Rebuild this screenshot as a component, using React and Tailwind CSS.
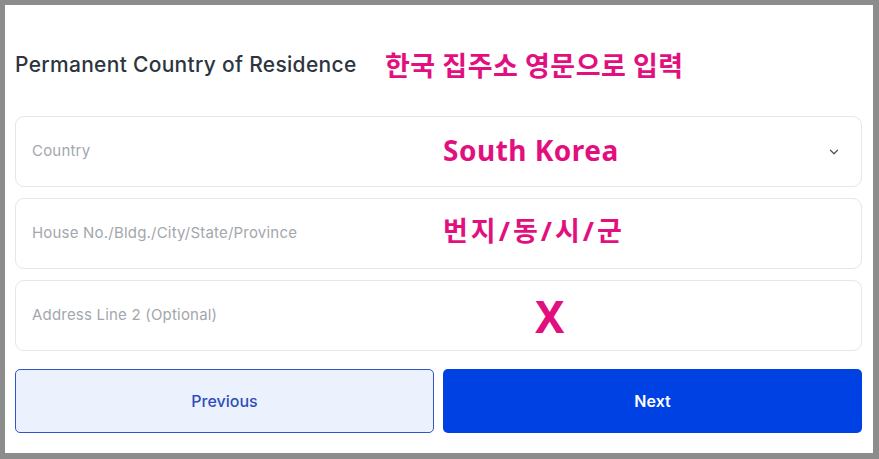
import React from 'react';

const pink = 'text-[#e2107f]';

const fields = [
  { id: 'country', label: 'Country', note: 'South Korea', noteClass: 'text-[28px] tracking-[0.5px] -mt-[3px]', select: true },
  { id: 'line1', label: 'House No./Bldg./City/State/Province', note: '번지/동/시/군', noteClass: 'text-[27px] tracking-[3px] -mt-[4px]' },
  { id: 'line2', label: 'Address Line 2 (Optional)', note: 'X', noteClass: 'text-[44px] pl-[92px] leading-none mt-[1px]' },
];

const Chevron = () => (
  <svg width="14" height="14" viewBox="0 0 24 24" fill="none" stroke="#555" strokeWidth="2.2" strokeLinecap="round" strokeLinejoin="round">
    <path d="M6 9l6 6 6-6" />
  </svg>
);

const App = () => {
  return (
    <div className="w-[879px] h-[459px] bg-[#8c8c8c] pt-[5px] pl-[5px] pr-[6px] pb-[6px]">
      <div className="h-full bg-white pl-[10px] pr-[11px] flex flex-col" style={{ fontFamily: 'Inter, "Noto Sans", sans-serif' }}>
        <div className="mt-[40px] h-[40px] flex items-center">
          <span className="w-[370px] text-[21px] font-medium text-[#2d3540] tracking-[0.3px]">Permanent Country of Residence</span>
          <span className={`${pink} text-[27px] font-bold tracking-[0.5px]`} style={{ fontFamily: '"Noto Sans CJK KR", sans-serif' }}>한국 집주소 영문으로 입력</span>
        </div>

        <div className="mt-[31px] flex flex-col gap-[11px]">
          {fields.map((f) => (
            <div key={f.id} className="h-[71px] border border-[#e4e6ea] rounded-[9px] flex items-center pl-[16px] pr-[20px]">
              <span className="w-[411px] text-[15px] tracking-[0.2px] text-[#a3a7ad]">{f.label}</span>
              <span className={`${pink} ${f.noteClass} font-bold flex-1`} style={{ fontFamily: '"Noto Sans", "Noto Sans CJK KR", sans-serif' }}>{f.note}</span>
              {f.select && <Chevron />}
            </div>
          ))}
        </div>

        <div className="mt-[18px] grid grid-cols-2 gap-[9px]">
          <button className="h-[64px] rounded-[5px] border border-[#2f55c8] bg-[#ecf2fd] text-[#2c4dbb] text-[16px] font-medium">Previous</button>
          <button className="h-[64px] rounded-[5px] bg-[#0041e3] text-white text-[16px] font-semibold">Next</button>
        </div>
      </div>
    </div>
  );
};

export default App;
